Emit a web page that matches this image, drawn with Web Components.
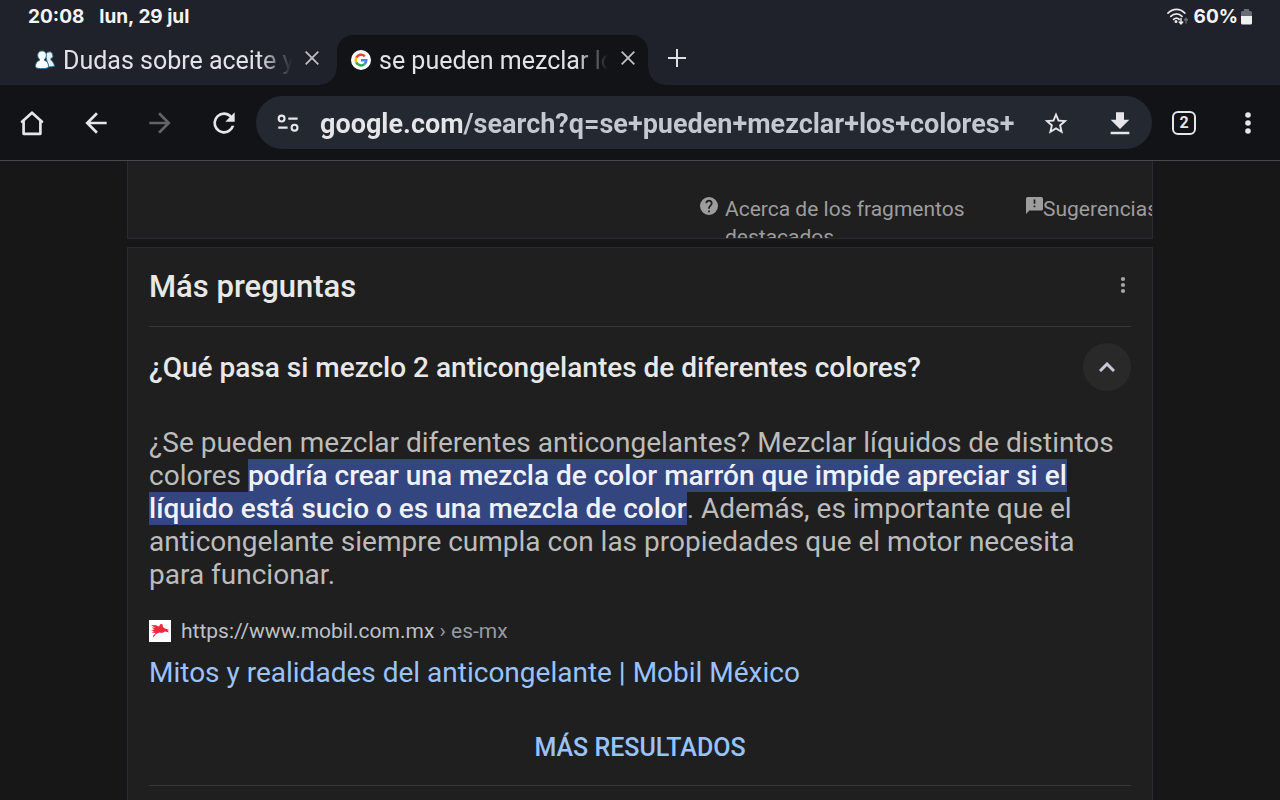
<!DOCTYPE html>
<html lang="es">
<head>
<meta charset="utf-8">
<meta name="viewport" content="width=device-width, initial-scale=1">
<title>se pueden mezclar los colores</title>
<style>
    body {
        margin: 0;
        height: 100vh;
        display: flex;
        flex-direction: column;
        overflow: hidden;
        background: #171717;
        font-family: Roboto, "Liberation Sans", sans-serif;
        --strip: #1f222a;
        --bar: #121316;
        --field: #242830;
        --ink: #e6e5ea;
        --card: #1f1f1f;
        --card-edge: #292b30;
        --rule: #36373a;
        --link: #99c3ff;
        --text-font: Roboto, "Liberation Sans", sans-serif;
    }
    main {
        flex: 1;
        min-height: 0;
        overflow: hidden;
        padding: 0 127px;
        border-top: 1px solid #454852;
    }
</style>
</head>
<body>
    <status-bar time="20:08" date="lun, 29 jul" battery="60%"></status-bar>
    <tab-strip>
        <browser-tab>
            <svg slot="icon" width="20" height="20" viewBox="0 0 20 20">
                <g fill="#fff" stroke="#2b7396" stroke-width="1">
                    <path d="M11 7a3.6 3.6 0 1 1 5 1.600c-.4.5-.3 1 .5 2 1.500 1.500 2.800 3 2.900 5.800l-6 .6z" fill="#e4eef5"/>
                    <path d="M7 .9c2.600 0 4.300 1.800 4.300 4.300 0 1.800-.8 3-1.800 4v1.200c2.500.8 4 2.500 4 6.200 0 1.200-1.800 2-6.500 2S.5 17.800.5 16.600c0-3.700 1.500-5.400 4-6.200V9.200c-1-1-1.800-2.200-1.800-4C2.700 2.700 4.400.9 7 .9z"/>
                </g>
            </svg>
            Dudas sobre aceite y
        </browser-tab>
        <browser-tab active>
            <svg slot="icon" width="20" height="20" viewBox="0 0 40 40">
                <circle cx="20" cy="20" r="20" fill="#fff"/>
                <g fill="none" stroke-width="5">
                    <path d="M27.500 12.500A10.600 10.600 0 0 0 10.600 15.200" stroke="#ea4335"/>
                    <path d="M10.600 15.200a10.600 10.600 0 0 0 0 9.600" stroke="#fbbc05"/>
                    <path d="M10.600 24.800a10.600 10.600 0 0 0 16.400 3.400" stroke="#34a853"/>
                    <path d="M27 28.200c2.500-2.200 3.600-5 3.600-7.700H20" stroke="#4285f4"/>
                </g>
            </svg>
            se pueden mezclar lo
        </browser-tab>
    </tab-strip>
    <browser-toolbar url="google.com/search?q=se+pueden+mezclar+los+colores+" tabs="2"></browser-toolbar>
    <main>
        <snippet-footer></snippet-footer>
        <questions-card heading="Más preguntas">
            <question-item>
                <span slot="question">¿Qué pasa si mezclo 2 anticongelantes de diferentes colores?</span>
                <answer-text>¿Se pueden mezclar diferentes anticongelantes? Mezclar líquidos de distintos colores <mark>podría crear una mezcla de color marrón que impide apreciar si el líquido está sucio o es una mezcla de color</mark>. Además, es importante que el anticongelante siempre cumpla con las propiedades que el motor necesita para funcionar.</answer-text>
                <source-link site="https://www.mobil.com.mx" path="es-mx" href="#">Mitos y realidades del anticongelante | Mobil México</source-link>
                <more-results href="#">MÁS RESULTADOS</more-results>
            </question-item>
        </questions-card>
    </main>

<script>
(function () {

    // shared helper: opens the shadow root and fills it
    function render(el, html) {
        el.attachShadow({ mode: 'open' }).innerHTML = html;
        return el.shadowRoot;
    }

    class StatusBar extends HTMLElement {
        constructor() {
            super();
            render(this, `
                <style>
                    :host {
                        display: flex;
                        align-items: center;
                        justify-content: space-between;
                        height: 35px;
                        padding: 0 28px 2px;
                        box-sizing: border-box;
                        background: var(--strip);
                        color: #f4f4f6;
                        font: 700 19px/32px Inter, Roboto, sans-serif;
                    }
                    div { display: flex; align-items: center; }
                    .clock { gap: 15px; }
                    .wifi { margin-right: 5px; }
                    .battery { margin-left: 3px; }
                </style>
                <div class="clock">
                    <span>${this.getAttribute('time')}</span>
                    <span>${this.getAttribute('date')}</span>
                </div>
                <div>
                    <svg class="wifi" width="22" height="18" viewBox="0 0 22 18" fill="none" stroke="#e8e8ea" stroke-width="1.700" stroke-linecap="round">
                        <path d="M1 5.200c5-5 12-5 16.800 0M3.800 8.400c3.400-3.300 8-3.300 11.200 0M6.600 11.400c1.800-1.700 4-1.700 5.600 0"/>
                        <circle cx="9" cy="13.500" r=".7" fill="#e8e8ea"/>
                        <path d="M14 10.500v5M12.300 14l1.700 1.800L15.700 14" stroke-width="1.500"/>
                        <path d="M19 15v-4.500M17.500 12l1.500-1.700 1.500 1.700" stroke="#6a6c73" stroke-width="1.300"/>
                    </svg>
                    <span>${this.getAttribute('battery')}</span>
                    <svg class="battery" width="11" height="16" viewBox="0 0 11 16">
                        <path d="M3 0h5v2h1.500A1.500 1.500 0 0 1 11 3.500V7H0V3.500A1.500 1.500 0 0 1 1.500 2H3z" fill="#6a6c73"/>
                        <path d="M0 7h11v7a1.500 1.500 0 0 1-1.500 1.500h-8A1.500 1.500 0 0 1 0 14z" fill="#f0f0f2"/>
                    </svg>
                </div>
            `);
        }
    }

    class TabStrip extends HTMLElement {
        constructor() {
            super();
            render(this, `
                <style>
                    :host {
                        display: flex;
                        height: 50px;
                        padding-left: 21px;
                        background: var(--strip);
                    }
                    button {
                        width: 58px;
                        padding: 0 0 5px;
                        border: 0;
                        background: none;
                        color: #e0dfe6;
                    }
                    svg { display: block; margin: auto; }
                </style>
                <slot></slot>
                <button aria-label="Nueva pestaña">
                    <svg width="18" height="18" viewBox="0 0 18 18" stroke="currentColor" stroke-width="2"><path d="M9 0v18M0 9h18"/></svg>
                </button>
            `);
        }
    }

    class BrowserTab extends HTMLElement {
        constructor() {
            super();
            render(this, `
                <style>
                    :host {
                        position: relative;
                        display: flex;
                        align-items: center;
                        box-sizing: border-box;
                        width: 316px;
                        padding: 0 14px;
                        border-radius: 16px 16px 0 0;
                        color: #e3e2e8;
                        font-size: 25px;
                        line-height: 50px;
                    }
                    :host([active]) { width: 311px; padding-right: 9px; background: var(--bar); }
                    /* outward curves where the active tab meets the toolbar */
                    :host([active])::before, :host([active])::after {
                        content: "";
                        position: absolute;
                        bottom: 0;
                        width: 17px;
                        height: 17px;
                    }
                    :host([active])::before {
                        right: 100%;
                        background: radial-gradient(circle at 0 0, transparent 16px, var(--bar) 17px);
                    }
                    :host([active])::after {
                        left: 100%;
                        background: radial-gradient(circle at 100% 0, transparent 16px, var(--bar) 17px);
                    }
                    .title {
                        flex: 1;
                        min-width: 0;
                        margin: 2px 9px 0 8px;
                        overflow: hidden;
                        white-space: nowrap;
                        -webkit-mask-image: linear-gradient(to left, transparent, #000 32px);
                        mask-image: linear-gradient(to left, transparent, #000 32px);
                    }
                    button {
                        padding: 0 4px 4px;
                        border: 0;
                        background: none;
                        color: #bfbec4;
                    }
                    svg { display: block; }
                </style>
                <slot name="icon"></slot>
                <span class="title"><slot></slot></span>
                <button aria-label="Cerrar pestaña">
                    <svg width="14" height="14" viewBox="0 0 14 14" stroke="currentColor" stroke-width="1.800"><path d="M.7.7l12.600 12.600M13.300.7L.7 13.300"/></svg>
                </button>
            `);
        }
    }

    class BrowserToolbar extends HTMLElement {
        constructor() {
            super();
            const icon = (body) => `<svg width="32" height="32" viewBox="0 0 24 24" fill="currentColor">${body}</svg>`;
            render(this, `
                <style>
                    :host {
                        display: flex;
                        align-items: center;
                        height: 75px;
                        background: var(--bar);
                        color: var(--ink);
                    }
                    button {
                        flex: none;
                        width: 64px;
                        height: 53px;
                        padding: 0;
                        border: 0;
                        background: none;
                        color: inherit;
                    }
                    button:disabled { color: #626367; }
                    svg { display: block; margin: auto; }
                    form {
                        flex: 1;
                        display: flex;
                        min-width: 0;
                        border-radius: 27px;
                        background: var(--field);
                    }
                    /* the host name is brighter than the rest of the address */
                    input {
                        flex: 1;
                        min-width: 0;
                        height: 53px;
                        box-sizing: border-box;
                        padding: 2px 0 0;
                        border: 0;
                        outline: 0;
                        color: #c4c8d2;
                        font: 700 27px/32px Roboto, "Liberation Sans", sans-serif;
                        background: linear-gradient(to right, #e6e5ea 144px, #c4c8d2 144px);
                        -webkit-background-clip: text;
                        background-clip: text;
                        -webkit-text-fill-color: transparent;
                    }
                    .count {
                        display: flex;
                        align-items: center;
                        justify-content: center;
                        width: 24px;
                        height: 24px;
                        box-sizing: border-box;
                        margin: auto;
                        border: 2px solid;
                        border-radius: 6px;
                        font: 700 16px/20px Roboto, sans-serif;
                    }
                </style>
                <button aria-label="Inicio">${icon('<path d="M12 4.300l7.500 6.700M12 4.300L4.500 11M5.700 10.200v9.900h12.600v-9.900" fill="none" stroke="currentColor" stroke-width="2" stroke-linejoin="round" stroke-linecap="round"/>')}</button>
                <button aria-label="Atrás">${icon('<path d="M20 11H7.830l5.590-5.590L12 4l-8 8 8 8 1.410-1.410L7.830 13H20v-2z"/>')}</button>
                <button aria-label="Adelante" disabled>${icon('<path d="M12 4l-1.410 1.410L16.170 11H4v2h12.170l-5.580 5.590L12 20l8-8z"/>')}</button>
                <button aria-label="Recargar">${icon('<path d="M17.650 6.350A7.958 7.958 0 0 0 12 4a8 8 0 1 0 7.730 10h-2.080A6 6 0 1 1 12 6c1.660 0 3.140.69 4.220 1.780L13 11h7V4l-2.350 2.350z"/>')}</button>
                <form>
                    <button type="button" aria-label="Información del sitio">${icon('<g fill="none" stroke="currentColor" stroke-width="1.600"><circle cx="7.200" cy="8.700" r="2.200"/><path d="M12.200 8.700h7M4.700 15.500h7"/><circle cx="16.900" cy="15.500" r="2.200"/></g>')}</button>
                    <input type="text" aria-label="Dirección" spellcheck="false" value="${this.getAttribute('url')}">
                    <button type="button" aria-label="Favorito">${icon('<path d="M20.500 10l-6.100-.5L12 3.900 9.600 9.500l-6.100.5 4.600 4-1.400 6L12 16.900l5.300 3.100-1.400-6zM12 15.100l-3.100 1.900.8-3.500L7 11.100l3.600-.3L12 7.500l1.400 3.300 3.600.3-2.700 2.400.8 3.500z"/>')}</button>
                    <button type="button" aria-label="Descargar">${icon('<path d="M19 9.500h-4V4H9v5.500H5l7 7 7-7zM5 18.500v2h14v-2H5z"/>')}</button>
                </form>
                <button aria-label="Pestañas"><span class="count">${this.getAttribute('tabs')}</span></button>
                <button aria-label="Menú">${icon('<circle cx="12" cy="6" r="2.100"/><circle cx="12" cy="12" r="2.100"/><circle cx="12" cy="18" r="2.100"/>')}</button>
            `);
        }
    }

    class SnippetFooter extends HTMLElement {
        constructor() {
            super();
            render(this, `
                <style>
                    :host {
                        display: grid;
                        grid-template-columns: 1fr 326px 126px;
                        box-sizing: border-box;
                        height: 78px;
                        padding-top: 34px;
                        overflow: hidden;
                        border: 1px solid var(--card-edge);
                        border-top: 0;
                        background: var(--card);
                        font-size: 21px;
                        line-height: 28px;
                    }
                    a {
                        display: flex;
                        align-items: flex-start;
                        color: #9d9d9d;
                        text-decoration: none;
                    }
                    .about { grid-column: 2; gap: 7px; }
                    svg { flex: none; margin-top: 2px; }
                </style>
                <a class="about" href="#">
                    <svg width="18" height="18" viewBox="2 2 20 20" fill="currentColor"><path d="M12 2a10 10 0 1 0 0 20 10 10 0 0 0 0-20zm1 17h-2v-2h2v2zm2.070-7.750l-.9.920C13.450 12.900 13 13.500 13 15h-2v-.5c0-1.100.45-2.100 1.170-2.830l1.240-1.260c.37-.36.59-.86.59-1.410a2 2 0 0 0-4 0H8a4 4 0 0 1 8 0c0 .88-.36 1.680-.93 2.250z"/></svg>
                    <span>Acerca de los fragmentos destacados</span>
                </a>
                <a href="#">
                    <svg width="17" height="17" viewBox="2 2 20 20" fill="currentColor"><path d="M20 2H4a2 2 0 0 0-2 2v18l4-4h14a2 2 0 0 0 2-2V4a2 2 0 0 0-2-2zm-7 12h-2v-2h2v2zm0-4h-2V5h2v5z"/></svg>
                    <span>Sugerencias</span>
                </a>
            `);
        }
    }

    class QuestionsCard extends HTMLElement {
        constructor() {
            super();
            render(this, `
                <style>
                    :host {
                        display: block;
                        margin-top: 8px;
                        padding: 0 21px 24px;
                        border: 1px solid var(--card-edge);
                        background: var(--card);
                    }
                    header {
                        display: flex;
                        align-items: center;
                        justify-content: space-between;
                        height: 78px;
                        border-bottom: 1px solid var(--rule);
                    }
                    h2 {
                        margin: 0;
                        color: #e8e8e8;
                        font: 500 31px/40px var(--text-font);
                    }
                    button { padding: 0 4px 4px; border: 0; background: none; color: #a6a6a6; }
                    svg { display: block; }
                </style>
                <header>
                    <h2>${this.getAttribute('heading')}</h2>
                    <button aria-label="Más opciones">
                        <svg width="8" height="18" viewBox="0 0 8 18" fill="currentColor"><circle cx="4" cy="3" r="2.100"/><circle cx="4" cy="9" r="2.100"/><circle cx="4" cy="15" r="2.100"/></svg>
                    </button>
                </header>
                <slot></slot>
            `);
        }
    }

    class QuestionItem extends HTMLElement {
        constructor() {
            super();
            const root = render(this, `
                <style>
                    :host { display: block; border-bottom: 1px solid var(--rule); }
                    .head {
                        display: flex;
                        align-items: center;
                        justify-content: space-between;
                        height: 80px;
                    }
                    h3 {
                        margin: 0;
                        color: #e8e8e8;
                        font: 500 28px/33px var(--text-font);
                    }
                    button {
                        flex: none;
                        width: 48px;
                        height: 48px;
                        padding: 0;
                        border: 0;
                        border-radius: 50%;
                        background: #292929;
                        color: #c9c6d6;
                    }
                    svg { display: block; margin: auto; }
                    .body { padding: 19px 0 21px; }
                    .body[hidden] { display: none; }
                </style>
                <div class="head">
                    <h3><slot name="question"></slot></h3>
                    <button aria-label="Contraer" aria-expanded="true">
                        <svg width="16" height="10" viewBox="0 0 16 10" fill="none" stroke="currentColor" stroke-width="3"><path d="M1 9l7-7 7 7"/></svg>
                    </button>
                </div>
                <div class="body"><slot></slot></div>
            `);
            const button = root.querySelector('button');
            const body = root.querySelector('.body');
            button.addEventListener('click', () => {
                body.hidden = !body.hidden;
                button.setAttribute('aria-expanded', String(!body.hidden));
            });
        }
    }

    class AnswerText extends HTMLElement {
        constructor() {
            super();
            render(this, `
                <style>
                    :host {
                        display: block;
                        color: #bcbcbc;
                        font: 400 28px/33px var(--text-font);
                    }
                    ::slotted(mark) {
                        background: #33467f;
                        color: #f0f1f6;
                        font-weight: 500;
                    }
                </style>
                <slot></slot>
            `);
        }
    }

    class SourceLink extends HTMLElement {
        constructor() {
            super();
            render(this, `
                <style>
                    :host { display: block; margin-top: 26px; }
                    a { display: block; color: var(--link); text-decoration: none; }
                    .site {
                        display: flex;
                        align-items: center;
                        gap: 10px;
                        color: #bdc1c6;
                        font-size: 21px;
                        line-height: 28px;
                    }
                    .path { color: #969ba1; }
                    .title { display: block; margin-top: 11px; font: 400 28px/33px var(--text-font); }
                </style>
                <a href="${this.getAttribute('href')}">
                    <span class="site">
                        <svg width="22" height="22" viewBox="0 0 22 22">
                            <path fill="#fff" d="M0 0h22v22H0z"/>
                            <path fill="#ee2b3e" d="M2 5l5 .3 3 1.200 1.500-2.500 2 .2L14 7l2 1.500 4.500 1.500-2 .5 1.500 2-4-1-3 1.500-2.500-.5-3.500 1.500L4.500 17.500 4 16l2.500-3-4-.5L5 11.200 2 10l3.500-.5L2.500 7.500l3.500.3z"/>
                        </svg>
                        <span>${this.getAttribute('site')} <span class="path">› ${this.getAttribute('path')}</span></span>
                    </span>
                    <span class="title"><slot></slot></span>
                </a>
            `);
        }
    }

    class MoreResults extends HTMLElement {
        constructor() {
            super();
            render(this, `
                <style>
                    :host { display: flex; justify-content: center; margin-top: 43px; }
                    a {
                        color: var(--link);
                        font: 500 25px/32px Roboto, "Liberation Sans", sans-serif;
                        text-decoration: none;
                    }
                </style>
                <a href="${this.getAttribute('href')}"><slot></slot></a>
            `);
        }
    }

    customElements.define('status-bar', StatusBar);
    customElements.define('tab-strip', TabStrip);
    customElements.define('browser-tab', BrowserTab);
    customElements.define('browser-toolbar', BrowserToolbar);
    customElements.define('snippet-footer', SnippetFooter);
    customElements.define('questions-card', QuestionsCard);
    customElements.define('question-item', QuestionItem);
    customElements.define('answer-text', AnswerText);
    customElements.define('source-link', SourceLink);
    customElements.define('more-results', MoreResults);

})();
</script>
</body>
</html>
